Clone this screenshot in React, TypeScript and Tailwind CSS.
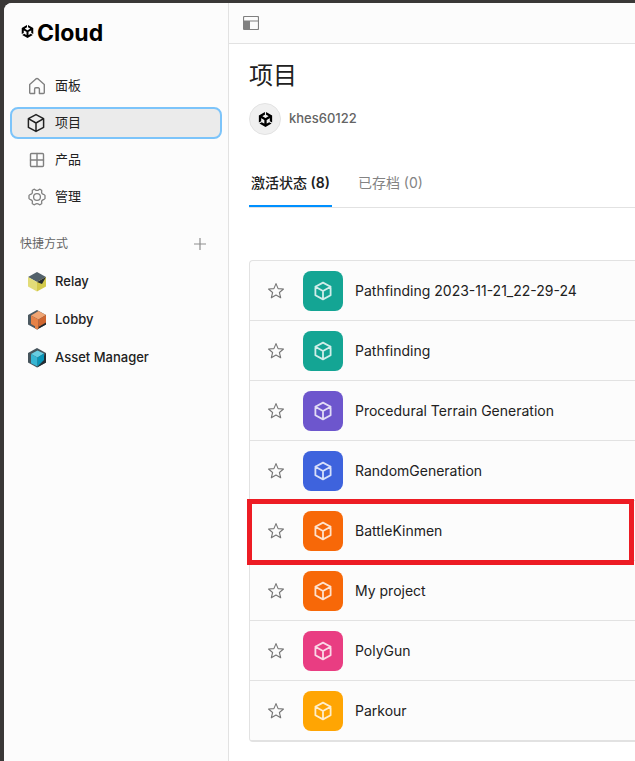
import { useState } from "react";
import type { ReactNode } from "react";
import { SiUnity } from "react-icons/si";

const stroke = { fill: "none", stroke: "currentColor", strokeLinejoin: "round", strokeLinecap: "round" } as const;

function CubeIcon({ className, weight }: { className: string; weight: number }) {
  return (
    <svg viewBox="0 0 20 20" className={className} {...stroke} strokeWidth={weight} aria-hidden="true">
      <path d="M10 1.6 17.6 5.7V14.3L10 18.4 2.4 14.3V5.7ZM2.4 5.7 10 10 17.6 5.7M10 10V18.4" />
    </svg>
  );
}

function HomeIcon() {
  return (
    <svg viewBox="0 0 18 18" className="size-[18px]" {...stroke} strokeWidth={1.4} aria-hidden="true">
      <path d="M1.7 7.4 7.900 1.900Q9 1 10.100 1.900L16.300 7.400V15.500a1 1 0 0 1-1 1H11.400V12a1.200 1.200 0 0 0-1.200-1.200H7.800A1.200 1.200 0 0 0 6.600 12v4.500H2.700a1 1 0 0 1-1-1Z" />
    </svg>
  );
}

function GridIcon() {
  return (
    <svg viewBox="0 0 18 18" className="size-[18px]" {...stroke} strokeWidth={1.4} aria-hidden="true">
      <rect x="2.5" y="2.5" width="13" height="13" rx="1" />
      <path d="M9 2.500v13M2.500 9h13" />
    </svg>
  );
}

function GearIcon() {
  return (
    <svg viewBox="0 0 18 18" className="size-[18px]" {...stroke} strokeWidth={1.3} aria-hidden="true">
      <path d="M6.1 1.2 C7 1 7.300 2.400 9 2.400 S11 1 11.900 1.200 L13.600 2.200 C14.200 3 13.100 4 13.900 5.300 S16.400 6.200 17 7.500 V10.500 C16.400 11.800 14.700 11.400 13.900 12.700 S14.200 15 13.600 15.800 L11.900 16.800 C11 17 10.700 15.600 9 15.600 S7 17 6.100 16.800 L4.400 15.800 C3.800 15 4.900 14 4.100 12.700 S1.600 11.800 1 10.500 V7.500 C1.600 6.200 3.300 6.600 4.100 5.300 S3.800 3 4.400 2.200Z" />
      <circle cx="9" cy="9" r="3.4" />
    </svg>
  );
}

function StarIcon({ filled }: { filled: boolean }) {
  return (
    <svg viewBox="0 0 18 18" className="size-[18px]" {...stroke} fill={filled ? "currentColor" : "none"} strokeWidth={1.1} aria-hidden="true">
      <path d="m9 1.600 2.100 5 5.400.4-4.100 3.500 1.300 5.300L9 13l-4.700 2.800 1.300-5.300L1.500 7l5.400-.4Z" />
    </svg>
  );
}

function PanelIcon() {
  return (
    <svg viewBox="0 0 16 14" className="h-[14px] w-4" aria-hidden="true">
      <rect x=".5" y=".5" width="15" height="13" rx="1" fill="none" stroke="currentColor" strokeWidth="1.2" />
      <path d="M1 5h14" stroke="currentColor" strokeWidth="1.2" />
      <path d="M1 5h6v8.500H1Z" fill="currentColor" />
    </svg>
  );
}

function RelayIcon() {
  return (
    <svg viewBox="0 0 18 20" className="h-5 w-[18px]" aria-hidden="true">
      <path d="M9 0 18 5 9 10 0 5Z" fill="#52616b" />
      <path d="M0 5 9 10V19.500L0 14.500Z" fill="#e2dc78" />
      <path d="M18 5 9 10V19.500L18 14.500Z" fill="#d3c94b" />
      <path d="M18 5 9 10 14 12Z" fill="#252b30" />
    </svg>
  );
}

function LobbyIcon() {
  return (
    <svg viewBox="0 0 18 20" className="h-5 w-[18px]" aria-hidden="true">
      <path d="M9 0 18 5V14.500L9 19.500 0 14.500V5Z" fill="#4c5961" />
      <path d="M18 12V14.500L9 19.500V16Z" fill="#20272c" />
      <path d="M10.500 1 18 5 10.500 9.500 3 5.500Z" fill="#f0a573" />
      <path d="M3 5.500 10.500 9.500V18.600L9 19.500 7 18.300V16.300L3 14Z" fill="#e68247" />
      <path d="M18 5 10.500 9.500V17L18 12.500Z" fill="#cf6630" />
    </svg>
  );
}

function AssetIcon() {
  return (
    <svg viewBox="0 0 18 20" className="h-5 w-[18px]" aria-hidden="true">
      <path d="M9 0 18 5V14.500L9 19.500 0 14.500V5Z" fill="#46545c" />
      <path d="M18 5V14.500L9 19.500Z" fill="#242d33" />
      <path d="M9.500 2.500 16 5.500 9.500 9.500 3 6Z" fill="#68cde2" />
      <path d="M3 6 9.500 9.500V18.500L3 15.200Z" fill="#35b5d3" />
      <path d="M16 5.500 9.500 9.500V18.500L16 12Z" fill="#0895b8" />
    </svg>
  );
}

const nav: { label: string; icon: ReactNode }[] = [
  { label: "面板", icon: <HomeIcon /> },
  { label: "项目", icon: <CubeIcon className="size-5" weight={1.5} /> },
  { label: "产品", icon: <GridIcon /> },
  { label: "管理", icon: <GearIcon /> },
];

const shortcuts: { label: string; icon: ReactNode }[] = [
  { label: "Relay", icon: <RelayIcon /> },
  { label: "Lobby", icon: <LobbyIcon /> },
  { label: "Asset Manager", icon: <AssetIcon /> },
];

const projects = [
  { name: "Pathfinding 2023-11-21_22-29-24", color: "bg-[#14a594]" },
  { name: "Pathfinding", color: "bg-[#14a594]" },
  { name: "Procedural Terrain Generation", color: "bg-[#6d56cd]" },
  { name: "RandomGeneration", color: "bg-[#3e63dd]" },
  { name: "BattleKinmen", color: "bg-[#f76808]", marked: true },
  { name: "My project", color: "bg-[#f76808]" },
  { name: "PolyGun", color: "bg-[#e93d82]" },
  { name: "Parkour", color: "bg-[#ffa503]" },
];

function ProjectRow({ name, color, marked }: { name: string; color: string; marked?: boolean }) {
  const [starred, setStarred] = useState(false);
  return (
    <li className="relative flex h-[60px] items-center border-b border-[#e2e2e2] pl-[17px]">
      <button
        type="button"
        aria-label={`Star ${name}`}
        aria-pressed={starred}
        onClick={() => setStarred(!starred)}
        className="text-[#767676]"
      >
        <StarIcon filled={starred} />
      </button>
      <a href="#" className="ml-[18px] flex items-center gap-3 text-sm text-[#212121]">
        <span className={`flex size-10 items-center justify-center rounded-lg text-white/80 ${color}`}>
          <CubeIcon className="size-5" weight={1.8} />
        </span>
        {name}
      </a>
      {marked && <span className="pointer-events-none absolute -top-0.5 right-px -bottom-[5px] -left-[3px] z-10 border-5 border-[#ed1c24]" />}
    </li>
  );
}

export default function App() {
  return (
    <div className="min-h-screen bg-[#3a3837] pt-[3px] pl-1 font-['Inter','Noto_Sans_CJK_SC',sans-serif] text-[#212121]">
      <div className="flex min-h-[calc(100vh-3px)] overflow-hidden rounded-tl-lg bg-white">
        <aside className="w-[225px] shrink-0 border-r border-[#e2e2e2] bg-[#fcfcfc] px-1.5 pt-3">
          <a href="#" className="flex h-9 items-center gap-[3px] pl-[11px] text-[23px] font-bold text-black">
            <SiUnity className="mb-1 size-[13px]" aria-hidden="true" />
            Cloud
          </a>
          <nav className="mt-[19px] flex flex-col gap-[5px]">
            {nav.map(({ label, icon }, i) => (
              <a
                key={label}
                href="#"
                aria-current={i === 1 ? "page" : undefined}
                className={`flex h-8 items-center gap-2 rounded-lg border-2 px-3.5 text-[13px] ${
                  i === 1 ? "border-[#7cc4fa] bg-[#ebebeb]" : "border-transparent"
                }`}
              >
                <span className={`flex w-[21px] ${i === 1 ? "justify-start text-[#212121]" : "justify-center text-[#808080]"}`}>{icon}</span>
                {label}
              </a>
            ))}
          </nav>
          <div className="mt-[21px] flex h-5 items-center justify-between pr-4 pl-2.5 text-xs text-[#646464]">
            <h2>快捷方式</h2>
            <button type="button" aria-label="Add shortcut" className="text-[#8d8d8d]">
              <svg viewBox="0 0 12 12" className="size-3" aria-hidden="true">
                <path d="M6 0v12M0 6h12" stroke="currentColor" strokeWidth="1.2" />
              </svg>
            </button>
          </div>
          <nav className="mt-3 flex flex-col gap-1.5">
            {shortcuts.map(({ label, icon }) => (
              <a key={label} href="#" className="flex h-8 items-center gap-2 px-4 text-[13px] font-medium">
                <span className="flex w-[21px] justify-center">{icon}</span>
                {label}
              </a>
            ))}
          </nav>
        </aside>

        <div className="min-w-0 flex-1">
          <header className="flex h-[41px] items-center border-b border-[#e2e2e2] bg-[#fcfcfc] px-3.5">
            <button type="button" aria-label="Toggle sidebar" className="text-[#808080]">
              <PanelIcon />
            </button>
          </header>
          <main className="pt-4 pl-5">
            <h1 className="text-2xl">项目</h1>
            <div className="mt-[11px] flex items-center gap-2 text-[13px] font-medium text-[#646464]">
              <span className="flex size-8 items-center justify-center rounded-full border border-[#e2e2e2] bg-[#f0f0f0] text-black">
                <SiUnity className="size-[15px]" aria-hidden="true" />
              </span>
              khes60122
            </div>
            <div role="tablist" className="mt-6 flex h-[49px] gap-6 border-b border-[#e2e2e2] text-sm">
              <button type="button" role="tab" aria-selected="true" className="border-b-2 border-[#0090ff] px-0.5 pt-0.5 font-semibold">
                <span className="font-medium">激活状态</span> (8)
              </button>
              <button type="button" role="tab" aria-selected="false" className="border-b-2 border-transparent px-0.5 pt-0.5 text-[#838383]">
                已存档 (0)
              </button>
            </div>
            <ul className="mt-[52px] rounded-l border-t border-b border-l border-[#e2e2e2] bg-[#fcfcfc]">
              {projects.map((project) => (
                <ProjectRow key={project.name} {...project} />
              ))}
            </ul>
          </main>
        </div>
      </div>
    </div>
  );
}
